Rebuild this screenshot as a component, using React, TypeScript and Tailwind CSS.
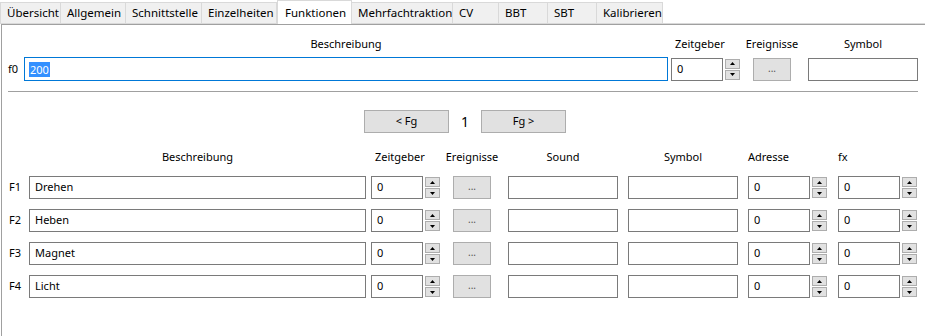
import React from "react";

const FONT = { fontFamily: '"Noto Sans", "Open Sans", sans-serif' };

const tabs: { label: string; w: number; sel?: boolean }[] = [
  { label: "Übersicht", w: 61 },
  { label: "Allgemein", w: 65 },
  { label: "Schnittstelle", w: 76 },
  { label: "Einzelheiten", w: 75 },
  { label: "Funktionen", w: 75, sel: true },
  { label: "Mehrfachtraktion", w: 101 },
  { label: "CV", w: 46 },
  { label: "BBT", w: 49 },
  { label: "SBT", w: 49 },
  { label: "Kalibrieren", w: 66 },
];

function Arrow({ up }: { up: boolean }) {
  return (
    <svg width="5" height="3" viewBox="0 0 5 3">
      <path d={up ? "M2.5 0 L5 3 L0 3 Z" : "M0 0 L5 0 L2.5 3 Z"} fill="#000" />
    </svg>
  );
}

function Spinner() {
  return (
    <div className="flex flex-col gap-[1px] w-[15px] ml-[2px]">
      <div className="h-[10px] border border-[#adadad] bg-[#e1e1e1] flex items-center justify-center">
        <Arrow up />
      </div>
      <div className="h-[10px] border border-[#adadad] bg-[#e1e1e1] flex items-center justify-center">
        <Arrow up={false} />
      </div>
    </div>
  );
}

function Box({ w, value, cls = "h-[23px]" }: { w: string; value?: string; cls?: string }) {
  return (
    <div className={`${w} ${cls} border border-[#7a7a7a] bg-white flex items-center pl-[5px] text-[11px] text-black`}>
      {value}
    </div>
  );
}

function Dots({ w }: { w: string }) {
  return (
    <div className={`${w} h-[23px] border border-[#adadad] bg-[#e1e1e1] flex items-center justify-center text-[10px] text-[#555] pb-[2px]`}>
      ...
    </div>
  );
}

const rows = [
  { n: "F1", d: "Drehen" },
  { n: "F2", d: "Heben" },
  { n: "F3", d: "Magnet" },
  { n: "F4", d: "Licht" },
];

export default function App() {
  return (
    <div className="w-[925px] h-[336px] bg-white overflow-hidden flex flex-col text-[11px] text-black" style={FONT}>
      {/* tabs */}
      <div className="flex items-end h-[23px] relative z-10">
        {tabs.map((t) =>
          t.sel ? (
            <div
              key={t.label}
              className="h-[24px] mb-[-1px] bg-white border border-b-0 border-[#d9d9d9] pl-[7px] flex items-center text-[11.5px] shrink-0"
              style={{ width: t.w }}
            >
              {t.label}
            </div>
          ) : (
            <div
              key={t.label}
              className="h-[21px] bg-[#f0f0f0] border border-b-0 border-l-0 border-[#d9d9d9] first:border-l pl-[6px] flex items-center text-[11.5px] shrink-0 whitespace-nowrap overflow-hidden"
              style={{ width: t.w }}
            >
              {t.label}
            </div>
          )
        )}
      </div>
      {/* page */}
      <div className="flex-1 border-t border-[#d9d9d9] flex">
        <div className="flex-1 ml-[1px] border-t border-l border-[#a0a0a0] flex flex-col">
          {/* top header */}
          <div className="flex mt-[12px] h-[15px] items-center pl-[6px]">
            <div className="w-[16px]" />
            <div className="w-[644px] text-center">Beschreibung</div>
            <div className="w-[52px] ml-[3px] text-center pl-[4px]">Zeitgeber</div>
            <div className="w-[15px] ml-[2px]" />
            <div className="w-[38px] ml-[13px] flex justify-center whitespace-nowrap">Ereignisse</div>
            <div className="w-[110px] ml-[17px] text-center">Symbol</div>
          </div>
          {/* f0 row */}
          <div className="flex mt-[5px] h-[24px] items-center pl-[6px]">
            <div className="w-[16px]">f0</div>
            <div className="w-[644px] h-[24px] border border-[#0078d7] bg-white flex items-center pl-[4px]">
              <span className="bg-[#3390ff] text-white leading-[15px] px-[1px]">200</span>
            </div>
            <div className="ml-[3px]">
              <Box w="w-[52px]" value="0" />
            </div>
            <Spinner />
            <div className="ml-[13px]">
              <Dots w="w-[38px]" />
            </div>
            <div className="ml-[17px]">
              <Box w="w-[110px]" />
            </div>
          </div>
          {/* separator */}
          <div className="mt-[10px] ml-[6px] w-[910px] h-px bg-[#a0a0a0]" />
          {/* nav */}
          <div className="flex mt-[18px] items-center pl-[362px]">
            <div className="w-[85px] h-[23px] border border-[#adadad] bg-[#e1e1e1] flex items-center justify-center">
              &lt; Fg
            </div>
            <div className="w-[32px] text-center text-[14px]">1</div>
            <div className="w-[85px] h-[23px] border border-[#adadad] bg-[#e1e1e1] flex items-center justify-center">
              Fg &gt;
            </div>
          </div>
          {/* header 2 */}
          <div className="flex mt-[17px] h-[15px] items-center pl-[7px]">
            <div className="w-[20px]" />
            <div className="w-[337px] text-center">Beschreibung</div>
            <div className="w-[52px] ml-[5px] pl-[4px] whitespace-nowrap">Zeitgeber</div>
            <div className="w-[15px] ml-[2px]" />
            <div className="w-[38px] ml-[13px] flex justify-center whitespace-nowrap">Ereignisse</div>
            <div className="w-[110px] ml-[17px] text-center">Sound</div>
            <div className="w-[110px] ml-[10px] text-center">Symbol</div>
            <div className="w-[62px] ml-[10px]">Adresse</div>
            <div className="w-[15px] ml-[2px]" />
            <div className="w-[62px] ml-[11px]">fx</div>
          </div>
          {/* rows */}
          <div className="flex flex-col gap-[10px] mt-[11px]">
            {rows.map((r) => (
              <div key={r.n} className="flex h-[23px] items-center pl-[7px]">
                <div className="w-[20px]">{r.n}</div>
                <Box w="w-[337px]" value={r.d} />
                <div className="ml-[5px]">
                  <Box w="w-[52px]" value="0" />
                </div>
                <Spinner />
                <div className="ml-[13px]">
                  <Dots w="w-[38px]" />
                </div>
                <div className="ml-[17px]">
                  <Box w="w-[110px]" />
                </div>
                <div className="ml-[10px]">
                  <Box w="w-[110px]" />
                </div>
                <div className="ml-[10px]">
                  <Box w="w-[62px]" value="0" />
                </div>
                <Spinner />
                <div className="ml-[11px]">
                  <Box w="w-[62px]" value="0" />
                </div>
                <Spinner />
              </div>
            ))}
          </div>
        </div>
      </div>
    </div>
  );
}
